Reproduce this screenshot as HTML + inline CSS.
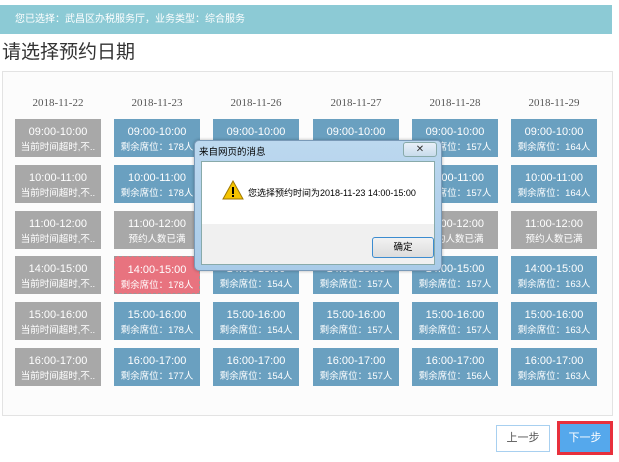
<!DOCTYPE html>
<html><head><meta charset="utf-8"><style>
*{margin:0;padding:0;box-sizing:border-box}
body{width:619px;height:462px;background:#fff;position:relative;overflow:hidden;font-family:"Liberation Sans","Noto Sans CJK SC",sans-serif}
.hdr{position:absolute;left:0;top:5px;width:612px;height:29px;background:#8ccad5;color:#fff;font-size:10px;line-height:29px;padding-left:15px}
.t{position:absolute;left:2px;top:37px;font-size:19px;color:#333}
.panel{position:absolute;left:2px;top:71px;width:611px;height:345px;border:1px solid #e3e3e3;background:#fcfcfc}
.d{position:absolute;top:97px;width:86px;text-align:center;font-size:11px;color:#555;font-family:"Liberation Serif","Noto Serif CJK SC",serif}
.c{position:absolute;width:86px;height:38px;background:#6aa0c0;color:#fff;text-align:center;font-size:11px;padding-top:6px;line-height:15px}
.c small{font-size:9.5px;display:block}
.g{background:#a8a8a8}.r{background:#e8737f;border:1px dashed #999}
.dlg{position:absolute;left:194px;top:140px;width:248px;height:131px;border:1px solid #7a9ab8;border-radius:5px;background:linear-gradient(#bcd8ef,#a9cbe8);box-shadow:0 0 3px rgba(0,0,0,.3)}
.dlg .tt{position:absolute;left:4px;top:3px;font-size:9.5px;color:#000}
.dlg .x{position:absolute;left:208px;top:1px;width:34px;height:15px;border:1px solid #8aa;border-radius:3px;background:linear-gradient(#e8f0f8,#c8dcec);font-size:10px;text-align:center;line-height:13px;color:#333}
.dlg .bd{position:absolute;left:6px;top:20px;width:234px;height:104px;background:#f0f0f0;border:1px solid #8aa}
.dlg .w{position:absolute;left:0;top:0;width:232px;height:62px;background:#fff}
.dlg .msg{position:absolute;left:46px;top:24px;font-size:9px;color:#000}
.btn{position:absolute;left:170px;top:75px;width:62px;height:21px;border:1px solid #3c8cd0;border-radius:3px;background:linear-gradient(#f2f2f2,#dcdcdc);font-size:9.5px;text-align:center;line-height:19px}
.b1{position:absolute;left:496px;top:425px;width:54px;height:27px;border:1px solid #a8d0f0;background:#fff;color:#555;font-size:11px;text-align:center;line-height:25px}
.b2{position:absolute;left:557px;top:421px;width:56px;height:34px;border:3px solid #e8303c;background:#55a8ec;color:#fff;font-size:11px;text-align:center;line-height:28px}
</style></head><body>
<div class="hdr">您已选择：武昌区办税服务厅，业务类型：综合服务</div>
<div class="t">请选择预约日期</div>
<div class="panel"></div>
<div class="d" style="left:15px">2018-11-22</div>
<div class="d" style="left:114px">2018-11-23</div>
<div class="d" style="left:213px">2018-11-26</div>
<div class="d" style="left:313px">2018-11-27</div>
<div class="d" style="left:412px">2018-11-28</div>
<div class="d" style="left:511px">2018-11-29</div>
<div id="g"></div>
<script>
var xs=[15,114,213,313,412,511],ys=[119,165,211,256,302,348],tm=["09:00-10:00","10:00-11:00","11:00-12:00","14:00-15:00","15:00-16:00","16:00-17:00"];
var cols=[
[0,0,0,0,0,0].map(()=>["g","当前时间超时,不.."]),
[["","178"],["","178"],["g","预约人数已满"],["r","178"],["","178"],["","177"]],
[["","154"],["","154"],["","154"],["","154"],["","154"],["","154"]],
[["","157"],["","157"],["","157"],["","157"],["","157"],["","157"]],
[["","157"],["","157"],["g","预约人数已满"],["","157"],["","157"],["","156"]],
[["","164"],["","164"],["g","预约人数已满"],["","163"],["","163"],["","163"]]];
var h="";
for(var i=0;i<6;i++)for(var j=0;j<6;j++){var c=cols[i][j];var s=c[0]=="g"?c[1]:"剩余席位："+c[1]+"人";
h+='<div class="c '+c[0]+'" style="left:'+xs[i]+'px;top:'+ys[j]+'px">'+tm[j]+'<small>'+s+'</small></div>';}
document.getElementById("g").innerHTML=h;
</script>
<div class="dlg">
<div class="tt">来自网页的消息</div>
<div class="x">✕</div>
<div class="bd"><div class="w">
<svg style="position:absolute;left:20px;top:18px" width="22" height="20" viewBox="0 0 22 20"><path d="M11 1 L21 19 L1 19 Z" fill="#f5c400" stroke="#a07800"/><rect x="10" y="7" width="2" height="7" fill="#000"/><rect x="10" y="15" width="2" height="2" fill="#000"/></svg>
<div class="msg">您选择预约时间为2018-11-23 14:00-15:00</div></div>
<div class="btn">确定</div></div>
</div>
<div class="b1">上一步</div>
<div class="b2">下一步</div>
</body></html>
